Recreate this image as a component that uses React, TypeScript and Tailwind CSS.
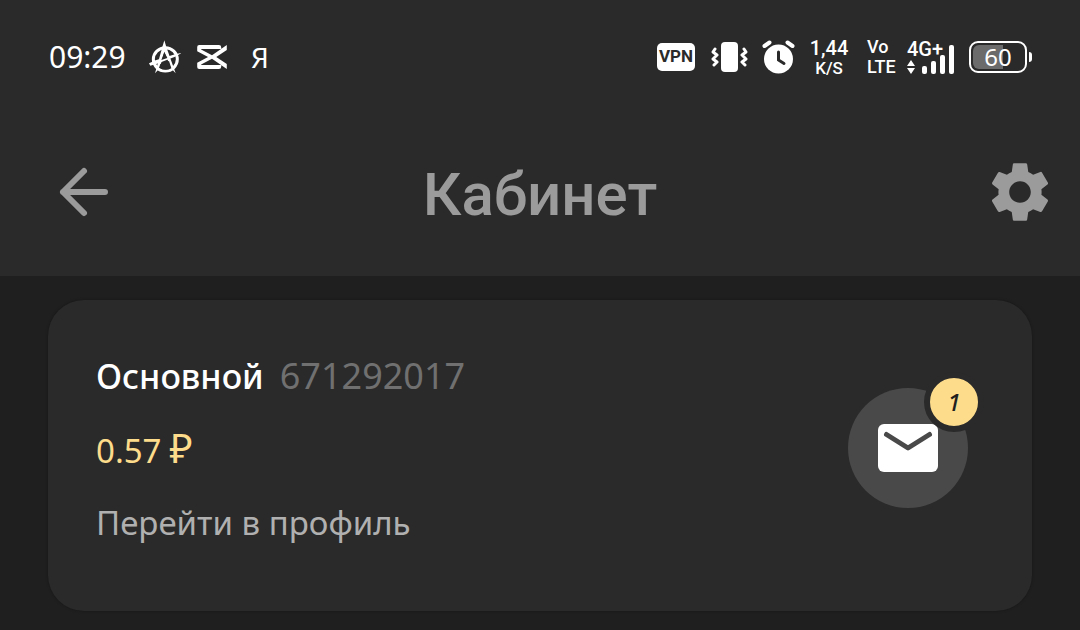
import { MdSettings } from "react-icons/md";

const ACCOUNT = {
  name: "Основной",
  id: "671292017",
  balance: "0.57",
  unread: 1,
};

function AnarchyIcon() {
  return (
    <svg viewBox="0 0 96 100" className="h-[34px] w-8" fill="none" aria-hidden="true">
      <ellipse cx="49" cy="57" rx="36" ry="35" stroke="white" strokeWidth="9" />
      <path d="M46 0 52 20 80 99 66 84 46 34 32 84 18 99 24 78 40 20Z" fill="white" />
      <path d="M0 69 20 60 78 42 97 38 82 48 24 70 4 76Z" fill="white" />
      <path d="M46 36 37 59 55 53ZM34 71 60 62 67 84Q50 94 30 82Z" fill="#2a2a2a" />
    </svg>
  );
}

function CapCutIcon() {
  return (
    <svg viewBox="0 0 90 73" className="h-6 w-[30px]" fill="white" aria-hidden="true">
      <path d="M6 0H66Q73 0 73 7V12H12V14L45 31 90 0V15L58 36.500 90 58V73L45 42 12 59V61H73V66Q73 73 66 73H6Q0 73 0 67V54L33 36.500 0 19V6Q0 0 6 0Z" />
    </svg>
  );
}

function VibrateIcon() {
  return (
    <svg viewBox="0 0 37 30" className="h-[30px] w-[37px]" fill="none" aria-hidden="true">
      <rect x="10" y="0" width="17" height="30" rx="4" fill="white" />
      <path
        d="M4 7 2 10 6 13 2 17 6 20 3 23M33 7 35 10 31 13 35 17 31 20 34 23"
        stroke="white"
        strokeWidth="3"
        strokeLinecap="round"
        strokeLinejoin="round"
      />
    </svg>
  );
}

function AlarmIcon() {
  return (
    <svg viewBox="0 0 33 34" className="h-[34px] w-[33px]" fill="none" aria-hidden="true">
      <circle cx="16.5" cy="19" r="14.5" fill="white" />
      <path d="M2.500 6 7.500 2.500M30.500 6 25.500 2.500" stroke="white" strokeWidth="4" strokeLinecap="round" />
      <path d="M16.500 12V20L22 23.500" stroke="#2a2a2a" strokeWidth="3" strokeLinecap="round" />
    </svg>
  );
}

function Signal() {
  return (
    <div className="relative h-9 w-12">
      <span className="absolute top-0 left-0 text-xl leading-5 font-medium">4G+</span>
      <svg viewBox="0 0 48 36" className="h-9 w-12" fill="white" aria-hidden="true">
        <path d="M4 21 8 27H0ZM4 35 8 29H0Z" />
        <rect x="15" y="27" width="5" height="8" rx="2" />
        <rect x="24" y="22" width="5" height="13" rx="2" />
        <rect x="33" y="16" width="5" height="19" rx="2" />
        <rect x="42" y="6" width="5" height="29" rx="2" />
      </svg>
    </div>
  );
}

function Battery() {
  return (
    <div className="flex items-center gap-0.5">
      <div className="relative flex h-8 w-[58px] items-center justify-center rounded-[9px] border-2 border-white">
        <span className="absolute inset-y-0.5 left-0.5 w-[30px] rounded-l-md bg-[#6b6b6b]" />
        <span className="relative font-['Noto_Sans'] text-2xl leading-6">60</span>
      </div>
      <span className="h-2.5 w-[3px] rounded-r-sm bg-white" />
    </div>
  );
}

function StatusBar() {
  return (
    <div className="flex h-[108px] items-center justify-between pt-1.5 pr-12 pl-[49px] text-white">
      <div className="flex items-center">
        <span className="w-[100px] font-['Noto_Sans'] text-3xl leading-8">09:29</span>
        <AnarchyIcon />
        <span className="ml-4">
          <CapCutIcon />
        </span>
        <span className="ml-6 font-['Noto_Sans'] text-[28px] leading-8">Я</span>
      </div>

      <div className="flex items-center gap-[14px]">
        <span className="mr-0.5 flex h-7 w-[38px] items-center justify-center rounded-[5px] bg-white text-[17px] font-bold text-[#2a2a2a]">
          VPN
        </span>
        <VibrateIcon />
        <AlarmIcon />
        <div className="flex w-10 flex-col items-center font-medium">
          <span className="text-xl leading-[22px]">1,44</span>
          <span className="text-[17px] leading-[18px]">K/S</span>
        </div>
        <div className="ml-1 flex items-center gap-2">
          <div className="flex w-8 flex-col text-lg leading-5 font-medium">
            <span>Vo</span>
            <span>LTE</span>
          </div>
          <Signal />
        </div>
        <Battery />
      </div>
    </div>
  );
}

function Header() {
  return (
    <header className="flex h-[168px] items-center justify-between px-6">
      <button type="button" aria-label="Назад" className="ml-6 text-[#9b9b9b]">
        <svg viewBox="0 0 72 72" className="size-[72px]" fill="none" aria-hidden="true">
          <path
            d="M36 15 15 36 36 57M15 36H57"
            stroke="currentColor"
            strokeWidth="6"
            strokeLinecap="round"
            strokeLinejoin="round"
          />
        </svg>
      </button>
      <h1 className="mr-6 pt-1.5 text-6xl font-medium text-[#9b9b9b]">Кабинет</h1>
      <button type="button" aria-label="Настройки" className="text-[#9b9b9b]">
        <MdSettings className="size-[72px]" />
      </button>
    </header>
  );
}

function MailButton() {
  return (
    <button type="button" aria-label="Сообщения" className="relative mt-6 h-[136px] w-[136px] shrink-0">
      <span className="absolute bottom-0 left-0 flex size-[120px] items-center justify-center rounded-full bg-[#494949]">
        <svg viewBox="0 0 60 48" className="h-12 w-[60px]" fill="none" aria-hidden="true">
          <rect width="60" height="48" rx="6" fill="white" />
          <path
            d="M8.500 10.500 30 24 51.500 10.500"
            stroke="#494949"
            strokeWidth="5"
            strokeLinecap="round"
            strokeLinejoin="round"
          />
        </svg>
      </span>
      <span className="absolute top-0 right-0 flex size-[60px] items-center justify-center rounded-full border-6 border-[#2a2a2a] bg-[#fddc8c] font-['Noto_Sans'] text-2xl font-medium text-[#1f1f1f] italic">
        {ACCOUNT.unread}
      </span>
    </button>
  );
}

function AccountCard() {
  return (
    <section className="flex items-start justify-between rounded-[36px] bg-[#2a2a2a] px-12 pt-12 pb-[60px] shadow-[0_0_3px_rgba(0,0,0,0.3)]">
      <div className="flex flex-col gap-4 font-['Noto_Sans']">
        <h2 className="flex items-baseline gap-4 text-[34px] leading-14 font-medium text-white">
          {ACCOUNT.name} <span className="text-4xl leading-14 font-normal text-[#707070]">{ACCOUNT.id}</span>
        </h2>
        <p className="flex items-baseline gap-2 text-[33px] leading-14 text-[#fddc8c]">
          {ACCOUNT.balance} <span className="text-[40px] leading-14">₽</span>
        </p>
        <a href="#profile" className="text-[33px] leading-14 text-[#b0b0b0]">
          Перейти в профиль
        </a>
      </div>
      <MailButton />
    </section>
  );
}

export default function App() {
  return (
    <div className="min-h-screen bg-[#1f1f1f] font-[Roboto,sans-serif]">
      <div className="bg-[#2a2a2a]">
        <StatusBar />
        <Header />
      </div>
      <main className="px-12 pt-6 pb-4">
        <AccountCard />
      </main>
    </div>
  );
}
